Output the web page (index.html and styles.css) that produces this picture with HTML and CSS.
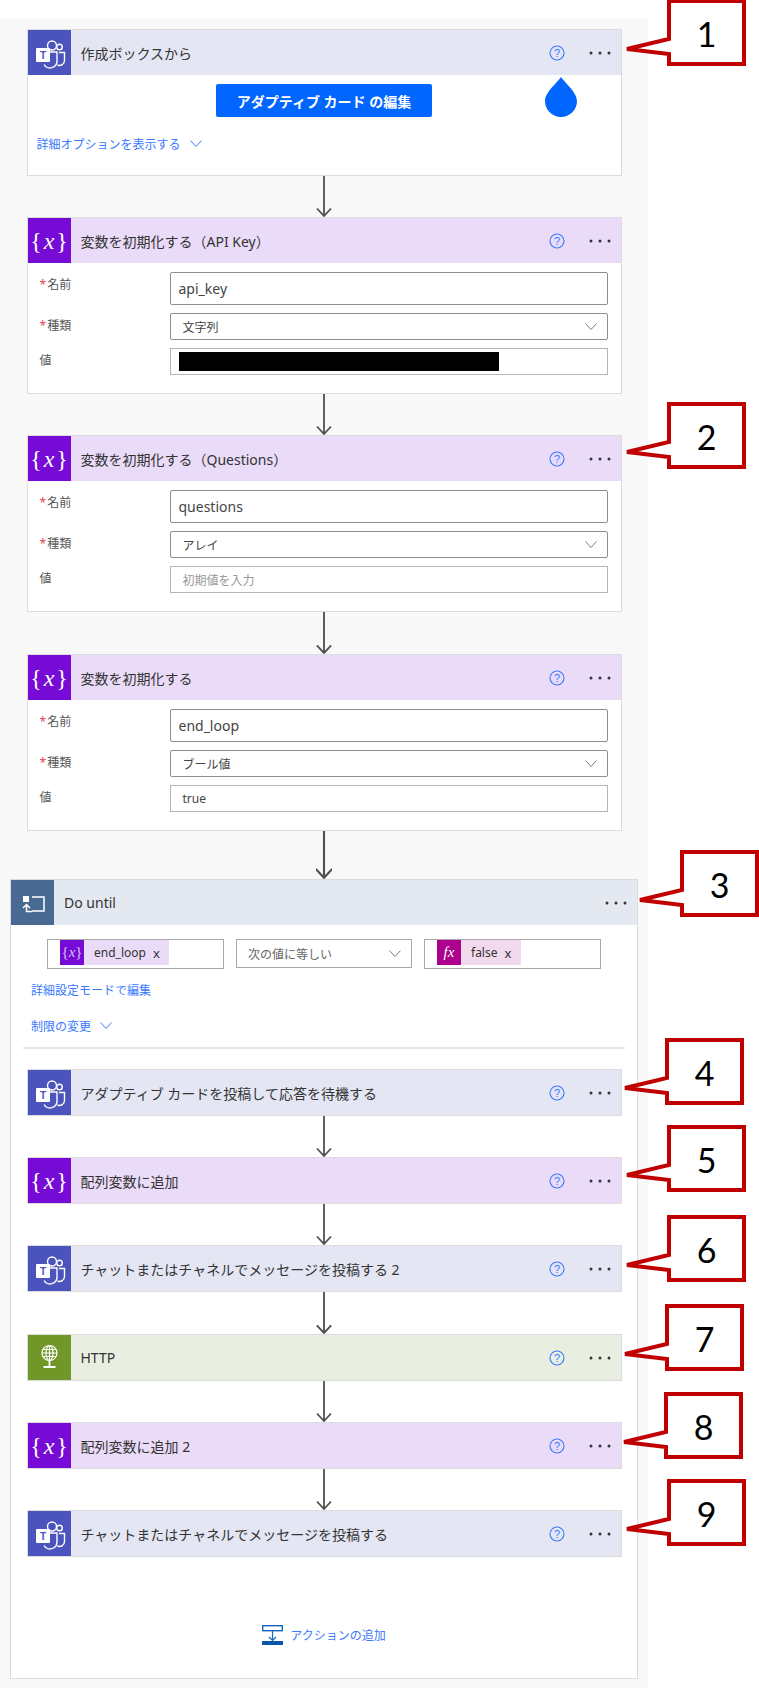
FILE: index.html
```html
<!DOCTYPE html>
<html lang="ja">
<head>
  <meta charset="UTF-8">
  <title>フロー</title>
  <link rel="stylesheet" href="styles.css">
</head>
<body>
  <svg class="defs" width="0" height="0">
    <symbol id="i-teams" viewBox="0 0 43 45">
      <circle cx="24" cy="15.5" r="4.5" fill="none" stroke="#fff" stroke-width="1.4"/>
      <circle cx="31.5" cy="17" r="2.8" fill="none" stroke="#fff" stroke-width="1.4"/>
      <path d="M22 22h7v9a7 7 0 0 1-13 3.5" fill="none" stroke="#fff" stroke-width="1.4"/>
      <path d="M31 22.500h5.500v8a5 5 0 0 1-7 4.500" fill="none" stroke="#fff" stroke-width="1.4"/>
      <rect x="8" y="18" width="14" height="14" rx="1" fill="#fff"/>
      <text x="15" y="29" class="teams-t">T</text>
    </symbol>
    <symbol id="i-help" viewBox="0 0 16 16">
      <circle cx="8" cy="8" r="7" fill="none" stroke="#3b79ff" stroke-width="1.100"/>
      <text x="8" y="12" class="help-q">?</text>
    </symbol>
    <symbol id="i-more" viewBox="0 0 24 6">
      <circle cx="3" cy="3" r="1.500" fill="#333"/>
      <circle cx="12" cy="3" r="1.500" fill="#333"/>
      <circle cx="21" cy="3" r="1.500" fill="#333"/>
    </symbol>
    <symbol id="i-chev" viewBox="0 0 12 7">
      <path d="M.5.5 6 6.500 11.500.5" fill="none" stroke="currentColor"/>
    </symbol>
    <symbol id="i-arrow" viewBox="0 0 16 41" preserveAspectRatio="xMidYMax slice">
      <path d="M8 -10v50.500M1 32.500 8 40l7-7.500" fill="none" stroke="#505050" stroke-width="1.800"/>
    </symbol>
    <symbol id="i-callout" viewBox="0 0 124 67">
      <path d="M5 50 47 40V2H122V65H47V55Z" fill="#fff" stroke="#c00000" stroke-width="4"/>
    </symbol>
  </svg>

  <main class="canvas">
    <section class="card">
      <header class="head teams">
        <div class="badge"><svg class="badge-svg"><use href="#i-teams"/></svg></div>
        <div class="title">作成ボックスから</div>
        <svg class="help"><use href="#i-help"/></svg>
        <svg class="more"><use href="#i-more"/></svg>
      </header>
      <div class="body-compose">
        <button class="edit-btn">アダプティブ カード の編集</button>
        <svg class="drop" viewBox="0 0 32 40"><path d="M16 0C13 5 0 15 0 24a16 16 0 0 0 32 0C32 15 19 5 16 0Z" fill="#0066ff"/></svg>
        <div class="link">詳細オプションを表示する <svg class="chev"><use href="#i-chev"/></svg></div>
      </div>
    </section>

    <svg class="arrow"><use href="#i-arrow"/></svg>

    <section class="card">
      <header class="head var">
        <div class="badge"><span class="braces">{<i>x</i>}</span></div>
        <div class="title">変数を初期化する（API Key）</div>
        <svg class="help"><use href="#i-help"/></svg>
        <svg class="more"><use href="#i-more"/></svg>
      </header>
      <div class="fields">
        <div class="label"><span class="req">*</span>名前</div>
        <div class="input">api_key</div>
        <div class="label"><span class="req">*</span>種類</div>
        <div class="select">文字列 <svg class="chev"><use href="#i-chev"/></svg></div>
        <div class="label">値</div>
        <div class="value secret"><div class="redact"></div></div>
      </div>
    </section>

    <svg class="arrow"><use href="#i-arrow"/></svg>

    <section class="card">
      <header class="head var">
        <div class="badge"><span class="braces">{<i>x</i>}</span></div>
        <div class="title">変数を初期化する（Questions）</div>
        <svg class="help"><use href="#i-help"/></svg>
        <svg class="more"><use href="#i-more"/></svg>
      </header>
      <div class="fields">
        <div class="label"><span class="req">*</span>名前</div>
        <div class="input">questions</div>
        <div class="label"><span class="req">*</span>種類</div>
        <div class="select">アレイ <svg class="chev"><use href="#i-chev"/></svg></div>
        <div class="label">値</div>
        <div class="value placeholder">初期値を入力</div>
      </div>
    </section>

    <svg class="arrow arrow-mid"><use href="#i-arrow"/></svg>

    <section class="card">
      <header class="head var">
        <div class="badge"><span class="braces">{<i>x</i>}</span></div>
        <div class="title">変数を初期化する</div>
        <svg class="help"><use href="#i-help"/></svg>
        <svg class="more"><use href="#i-more"/></svg>
      </header>
      <div class="fields">
        <div class="label"><span class="req">*</span>名前</div>
        <div class="input">end_loop</div>
        <div class="label"><span class="req">*</span>種類</div>
        <div class="select">ブール値 <svg class="chev"><use href="#i-chev"/></svg></div>
        <div class="label">値</div>
        <div class="value">true</div>
      </div>
    </section>

    <svg class="arrow arrow-long"><use href="#i-arrow"/></svg>

    <section class="loop">
      <header class="head until">
        <div class="badge">
          <svg class="badge-svg" viewBox="0 0 43 45">
            <rect x="12" y="16" width="6" height="6" fill="#fff"/>
            <path d="M21 17h12v14H21" fill="none" stroke="#fff" stroke-width="1.500"/>
            <path d="M15.500 32v-7M12 28l3.500-3.500 3.500 3.500" fill="none" stroke="#fff" stroke-width="1.500"/>
            <path d="M15 31.500h6" stroke="#fff" stroke-width="1.500"/>
          </svg>
        </div>
        <div class="title">Do until</div>
        <svg class="more"><use href="#i-more"/></svg>
      </header>

      <div class="cond">
        <div class="cond-box">
          <div class="tag tag-var"><span class="tag-icon"><span class="braces-sm">{<i>x</i>}</span></span>end_loop<span class="tag-x">x</span></div>
        </div>
        <div class="cond-select">次の値に等しい <svg class="chev"><use href="#i-chev"/></svg></div>
        <div class="cond-box">
          <div class="tag tag-fx"><span class="tag-icon"><i class="fx">fx</i></span>false<span class="tag-x">x</span></div>
        </div>
      </div>
      <div class="link link-adv">詳細設定モードで編集</div>
      <div class="link link-limit">制限の変更 <svg class="chev"><use href="#i-chev"/></svg></div>
      <hr class="divider">

      <div class="steps">
        <section class="card">
          <header class="head teams">
            <div class="badge"><svg class="badge-svg"><use href="#i-teams"/></svg></div>
            <div class="title">アダプティブ カードを投稿して応答を待機する</div>
            <svg class="help"><use href="#i-help"/></svg>
            <svg class="more"><use href="#i-more"/></svg>
          </header>
        </section>
        <svg class="arrow"><use href="#i-arrow"/></svg>
        <section class="card">
          <header class="head var">
            <div class="badge"><span class="braces">{<i>x</i>}</span></div>
            <div class="title">配列変数に追加</div>
            <svg class="help"><use href="#i-help"/></svg>
            <svg class="more"><use href="#i-more"/></svg>
          </header>
        </section>
        <svg class="arrow"><use href="#i-arrow"/></svg>
        <section class="card">
          <header class="head teams">
            <div class="badge"><svg class="badge-svg"><use href="#i-teams"/></svg></div>
            <div class="title">チャットまたはチャネルでメッセージを投稿する 2</div>
            <svg class="help"><use href="#i-help"/></svg>
            <svg class="more"><use href="#i-more"/></svg>
          </header>
        </section>
        <svg class="arrow arrow-mid"><use href="#i-arrow"/></svg>
        <section class="card">
          <header class="head http">
            <div class="badge">
              <svg class="badge-svg" viewBox="0 0 43 45">
                <g fill="none" stroke="#fff" stroke-width="1.200">
                  <circle cx="21.500" cy="18" r="7.500"/>
                  <ellipse cx="21.500" cy="18" rx="3.500" ry="7.500"/>
                  <path d="M21.500 10.500v15M14 18h15M15 14.500h13M15 21.500h13"/>
                </g>
                <path d="M21.500 26v6M15.500 32h12" stroke="#fff" stroke-width="1.800"/>
              </svg>
            </div>
            <div class="title">HTTP</div>
            <svg class="help"><use href="#i-help"/></svg>
            <svg class="more"><use href="#i-more"/></svg>
          </header>
        </section>
        <svg class="arrow"><use href="#i-arrow"/></svg>
        <section class="card">
          <header class="head var">
            <div class="badge"><span class="braces">{<i>x</i>}</span></div>
            <div class="title">配列変数に追加 2</div>
            <svg class="help"><use href="#i-help"/></svg>
            <svg class="more"><use href="#i-more"/></svg>
          </header>
        </section>
        <svg class="arrow"><use href="#i-arrow"/></svg>
        <section class="card">
          <header class="head teams">
            <div class="badge"><svg class="badge-svg"><use href="#i-teams"/></svg></div>
            <div class="title">チャットまたはチャネルでメッセージを投稿する</div>
            <svg class="help"><use href="#i-help"/></svg>
            <svg class="more"><use href="#i-more"/></svg>
          </header>
        </section>
      </div>

      <div class="add-action">
        <svg class="add-icon" viewBox="0 0 21 20">
          <rect x=".7" y=".7" width="19.600" height="5" fill="none" stroke="#1565c0" stroke-width="1.400"/>
          <path d="M10.500 6v9M7 12l3.500 3.500L14 12" fill="none" stroke="#1565c0" stroke-width="1.200"/>
          <rect y="16" width="21" height="4" fill="#0a56a8"/>
        </svg>
        <span>アクションの追加</span>
      </div>
    </section>
  </main>

  <!-- 注釈の吹き出し -->
  <div class="callout c1"><svg class="callout-shape"><use href="#i-callout"/></svg><span class="num">1</span></div>
  <div class="callout c2"><svg class="callout-shape"><use href="#i-callout"/></svg><span class="num">2</span></div>
  <div class="callout c3"><svg class="callout-shape"><use href="#i-callout"/></svg><span class="num">3</span></div>
  <div class="callout c4"><svg class="callout-shape"><use href="#i-callout"/></svg><span class="num">4</span></div>
  <div class="callout c5"><svg class="callout-shape"><use href="#i-callout"/></svg><span class="num">5</span></div>
  <div class="callout c6"><svg class="callout-shape"><use href="#i-callout"/></svg><span class="num">6</span></div>
  <div class="callout c7"><svg class="callout-shape"><use href="#i-callout"/></svg><span class="num">7</span></div>
  <div class="callout c8"><svg class="callout-shape"><use href="#i-callout"/></svg><span class="num">8</span></div>
  <div class="callout c9"><svg class="callout-shape"><use href="#i-callout"/></svg><span class="num">9</span></div>
</body>
</html>
```

FILE: styles.css
```css
* {
  box-sizing: border-box;
}
html, body {
  margin: 0;
  background: #fff;
}
body {
  position: relative;
  width: 759px;
  height: 1688px;
  overflow: hidden;
  padding-top: 19px;
  font-family: "Noto Sans", "Noto Sans CJK JP", sans-serif;
  font-size: 12px;
  color: #333;
}
.defs {
  display: none;
}
.teams-t {
  font-family: "Liberation Sans", sans-serif;
  font-size: 10px;
  font-weight: bold;
  fill: #4b53bc;
  text-anchor: middle;
}
.help-q {
  font-family: "Liberation Sans", sans-serif;
  font-size: 11px;
  fill: #3b79ff;
  text-anchor: middle;
}

.canvas {
  width: 648px;
  height: 1669px;
  background: #f8f8f8;
  padding-top: 10px;
  display: flex;
  flex-direction: column;
  align-items: center;
}
.card {
  width: 595px;
  flex: none;
  background: #fff;
  border: 1px solid #dcdcdc;
}
.arrow {
  display: block;
  flex: none;
  width: 16px;
  height: 41px;
  margin: 0 auto;
}
.arrow-mid {
  height: 42px;
}
.arrow-long {
  height: 48px;
}

/* cabecera de cada paso */
.head {
  display: flex;
  align-items: center;
  height: 45px;
  padding-right: 9px;
}
.head .badge {
  width: 43px;
  height: 45px;
  flex: none;
  display: flex;
  align-items: center;
  justify-content: center;
  color: #fff;
}
.badge-svg {
  width: 43px;
  height: 45px;
  display: block;
}
.title {
  flex: 1;
  padding-left: 10px;
  font-size: 14px;
  color: #333;
  white-space: nowrap;
}
.help {
  width: 16px;
  height: 16px;
  flex: none;
  margin-right: 23px;
}
.more {
  width: 24px;
  height: 6px;
  flex: none;
}
.teams { background: #e4e6f4; }
.teams .badge { background: #4b53bc; }
.var { background: #eadbf8; }
.var .badge { background: #770bd6; }
.until { background: #e4e8f0; }
.until .badge { background: #486991; }
.http { background: #e9efe0; }
.http .badge { background: #709727; }

.braces {
  font-family: "Liberation Serif", serif;
  font-size: 24px;
  line-height: 1;
  letter-spacing: 2px;
  margin-right: -2px;
}
.braces-sm {
  font-family: "Liberation Serif", serif;
  font-size: 15px;
  color: #d9c2f2;
}

/* compose body */
.body-compose {
  position: relative;
  height: 100px;
  padding-top: 9px;
}
.edit-btn {
  display: block;
  width: 216px;
  height: 33px;
  margin: 0 auto;
  border: none;
  border-radius: 2px;
  background: #0066ff;
  color: #fff;
  font-family: inherit;
  font-size: 14px;
  font-weight: bold;
  white-space: nowrap;
}
.drop {
  position: absolute;
  left: 517px;
  top: 2px;
  width: 32px;
  height: 40px;
}
.link {
  color: #3b79ff;
  font-size: 12px;
  line-height: 18px;
  white-space: nowrap;
}
.body-compose .link {
  margin: 19px 0 0 9px;
}
.chev {
  width: 12px;
  height: 7px;
  color: #7c7c7c;
}
.link .chev {
  color: #3b79ff;
  margin-left: 6px;
  vertical-align: 2px;
}

/* variable form */
.fields {
  display: grid;
  grid-template-columns: 130px 1fr;
  row-gap: 8px;
  padding: 9px 13px 18px 12px;
}
.label {
  padding-top: 4px;
  line-height: 18px;
  font-size: 12px;
  color: #555;
}
.req {
  color: #e8434e;
  margin-right: 1px;
}
.input, .select, .value {
  display: flex;
  align-items: center;
  background: #fff;
  border-radius: 2px;
  white-space: nowrap;
}
.input {
  height: 33px;
  padding-left: 8px;
  border: 1px solid #8f8f8f;
  font-size: 14px;
  color: #444;
}
.select {
  height: 27px;
  padding: 0 10px 0 12px;
  border: 1px solid #8f8f8f;
  justify-content: space-between;
  color: #444;
}
.value {
  height: 27px;
  padding-left: 12px;
  border: 1px solid #b5b5b5;
  border-radius: 0;
  color: #444;
}
.placeholder {
  color: #999;
}
.secret {
  padding-left: 8px;
}
.redact {
  width: 320px;
  height: 19px;
  background: #000;
}

/* do until */
.loop {
  width: 628px;
  flex: none;
  background: #fff;
  border: 1px solid #dcdcdc;
  padding-bottom: 31px;
}
.cond {
  display: grid;
  grid-template-columns: 177px 176px 177px;
  column-gap: 12px;
  align-items: start;
  padding: 14px 0 0 36px;
}
.cond-box {
  height: 30px;
  padding-left: 12px;
  border: 1px solid #a9a9a9;
  background: #fff;
}
.cond-select {
  height: 29px;
  padding: 0 10px 0 11px;
  border: 1px solid #a9a9a9;
  display: flex;
  align-items: center;
  justify-content: space-between;
  color: #666;
  white-space: nowrap;
}
.tag {
  display: flex;
  align-items: center;
  height: 25px;
  font-size: 12px;
  color: #333;
}
.tag-var {
  width: 109px;
  background: #eadbf8;
}
.tag-fx {
  width: 84px;
  background: #f2d9ee;
}
.tag-icon {
  width: 24px;
  height: 25px;
  margin-right: 10px;
  flex: none;
  display: flex;
  align-items: center;
  justify-content: center;
}
.tag-var .tag-icon { background: #770bd6; }
.tag-fx .tag-icon { background: #ad008c; }
.fx {
  font-family: "Liberation Serif", serif;
  font-size: 15px;
  color: #fff;
}
.tag-x {
  margin-left: 7px;
  font-size: 13px;
}
.link-adv {
  margin: 13px 0 0 20px;
}
.link-limit {
  margin: 18px 0 0 20px;
}
.divider {
  height: 2px;
  margin: 11px 12px 0 12px;
  border: none;
  background: #e6e6e6;
}
.steps {
  display: flex;
  flex-direction: column;
  align-items: center;
  margin-top: 20px;
}
.add-action {
  display: flex;
  align-items: center;
  justify-content: center;
  gap: 7px;
  height: 24px;
  margin-top: 66px;
  color: #3b79ff;
}
.add-icon {
  width: 21px;
  height: 20px;
}

/* annotation callouts */
.callout {
  position: absolute;
  width: 124px;
  height: 67px;
}
.callout-shape {
  width: 124px;
  height: 67px;
  display: block;
}
.num {
  position: absolute;
  left: 47px;
  right: 2px;
  top: 12px;
  text-align: center;
  font-family: Lato, sans-serif;
  font-size: 34px;
  line-height: 46px;
  color: #000;
}
.c1 { left: 622px; top: -1px; }
.c2 { left: 622px; top: 402px; }
.c3 { left: 635px; top: 850px; }
.c4 { left: 620px; top: 1038px; }
.c5 { left: 622px; top: 1125px; }
.c6 { left: 622px; top: 1215px; }
.c7 { left: 620px; top: 1304px; }
.c8 { left: 619px; top: 1392px; }
.c9 { left: 622px; top: 1479px; }
```
